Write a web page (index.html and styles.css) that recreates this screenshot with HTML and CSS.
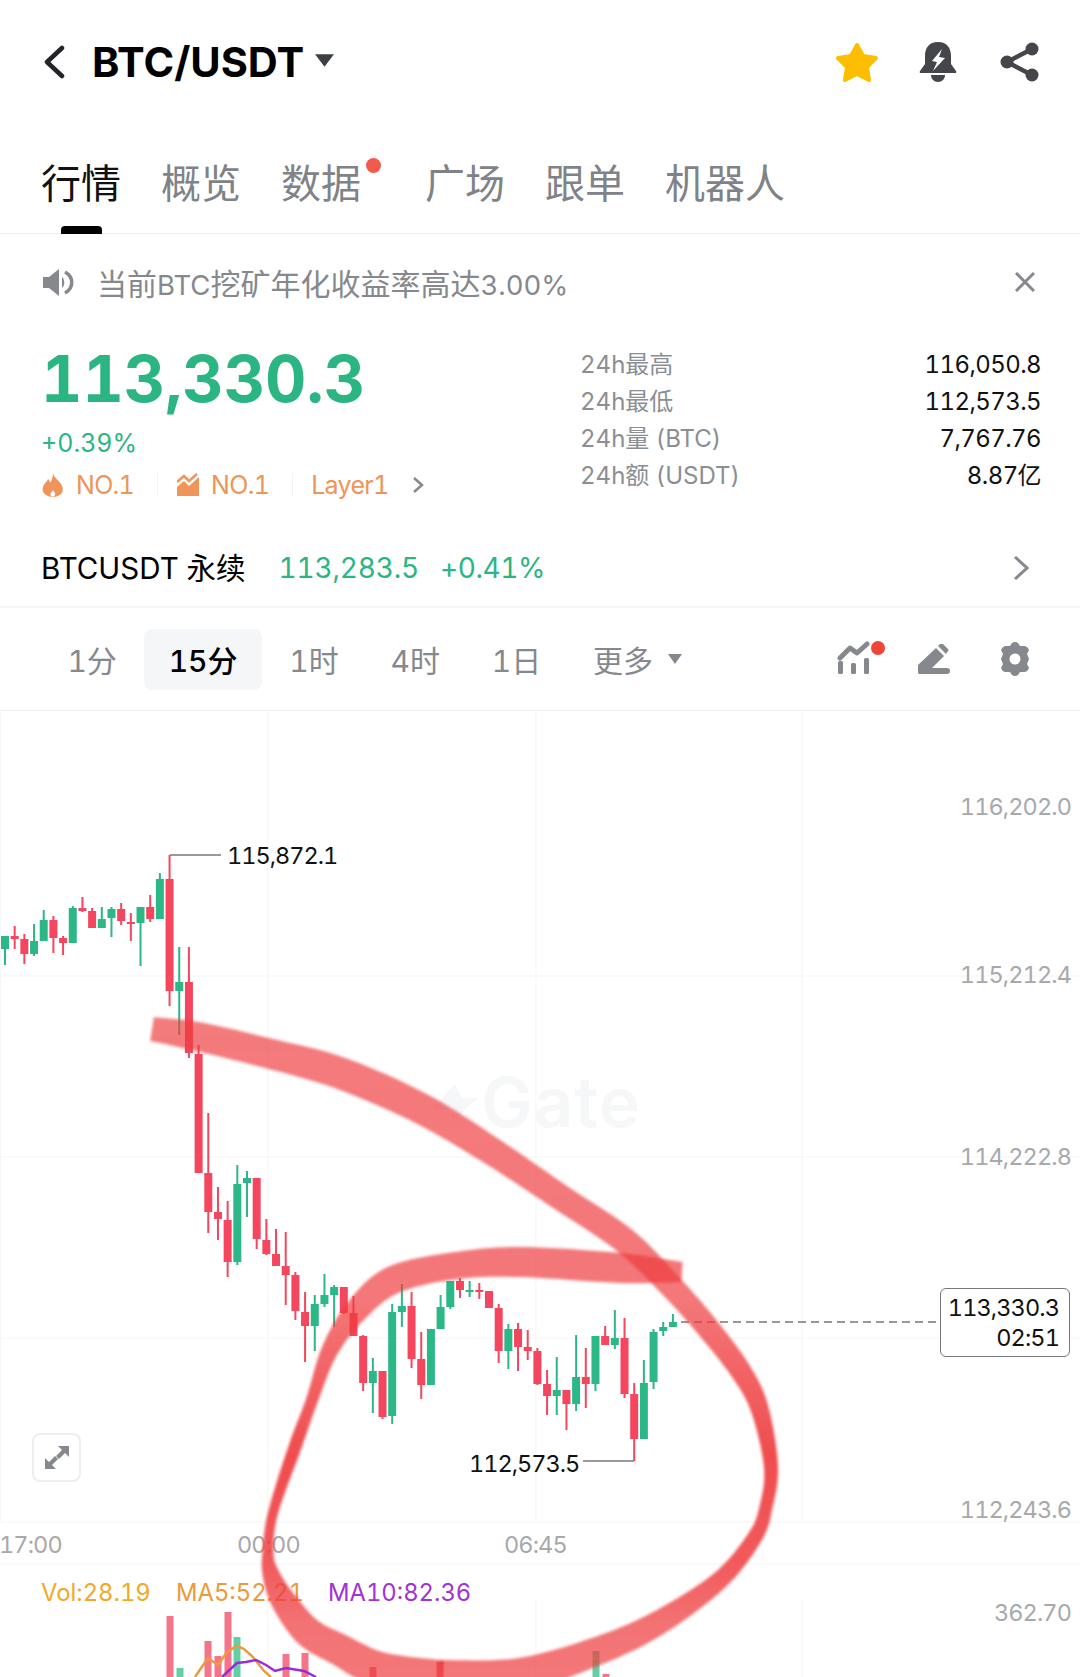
FILE: index.html
```html
<!DOCTYPE html>
<html lang="zh-CN">
<head>
    <meta charset="UTF-8">
    <meta name="viewport" content="width=device-width, initial-scale=1.0">
    <title>BTC/USDT</title>
    <link rel="stylesheet" href="styles.css">
</head>
<body>
<div class="page">
    <header class="top-bar">
        <svg class="back-icon" viewBox="0 0 24 34"><polyline points="20,3 5,17 20,31"/></svg>
        <h1 class="pair">BTC/USDT</h1>
        <svg class="pair-caret" viewBox="0 0 20 14"><path d="M1 1H19L10 13Z"/></svg>
        <div class="top-actions">
            <svg class="star-icon" viewBox="0 0 44 41"><polygon points="22,3 28,14 41,16 32,25 34,38 22,32 10,38 12,25 3,16 16,14"/></svg>
            <svg class="bell-icon" viewBox="0 0 38 40">
                <path d="M19 0C10 0 6 6 6 14V22L1 29Q0 31 2 31H36Q38 31 37 29L32 22V14C32 6 28 0 19 0Z"/>
                <path d="M12 33H26C26 37 23 40 19 40C15 40 12 37 12 33Z"/>
                <polygon class="bolt" points="23,7 13,19 18,20 14,29 26,16 20,15"/>
            </svg>
            <svg class="share-icon" viewBox="0 0 40 40">
                <line x1="32" y1="7" x2="7" y2="20"/>
                <line x1="7" y1="20" x2="32" y2="33"/>
                <circle cx="32" cy="7" r="6.5"/>
                <circle cx="7" cy="20" r="6.5"/>
                <circle cx="32" cy="33" r="6.5"/>
            </svg>
        </div>
    </header>

    <nav class="tabs">
        <div class="tab tab-active">行情</div>
        <div class="tab">概览</div>
        <div class="tab tab-dot">数据</div>
        <div class="tab">广场</div>
        <div class="tab">跟单</div>
        <div class="tab">机器人</div>
    </nav>

    <div class="notice">
        <div class="notice-left">
            <svg class="speaker-icon" viewBox="0 0 31 27">
                <path d="M0 8H6L16 0V27L6 19H0Z"/>
                <path d="M19 8C22 10 22 17 19 19Z"/>
                <path class="arc" d="M22 3C31 8 31 19 22 24"/>
            </svg>
            <span>当前<span class="latin">BTC</span>挖矿年化收益率高达<span class="latin">3.00%</span></span>
        </div>
        <svg class="close-icon" viewBox="0 0 20 20"><path d="M1 1L19 19M19 1L1 19"/></svg>
    </div>

    <section class="summary">
        <div class="summary-left">
            <div class="price">113,330.3</div>
            <div class="change">+0.39%</div>
            <div class="tags">
                <svg class="tag-icon" viewBox="0 0 22 24"><path d="M11 0C12 5 18 8 20 13C23 20 17 24 11 24C5 24 -1 20 1 14C2 10 5 9 6 6C8 8 8 9 8 10C10 7 11 4 11 0Z"/><path class="tag-cut" d="M11 17C12 19 14 20 13 22C12 24 9 24 8.5 22C8 20 10 19 11 17Z"/></svg>
                <span class="tag-text">NO.1</span>
                <span class="tag-sep"></span>
                <svg class="tag-icon" viewBox="0 0 22 24"><path d="M0 14L7 8L12 13L22 4V23H0Z"/><path class="tag-line" d="M0 9L7 3L12 8L20 1"/></svg>
                <span class="tag-text">NO.1</span>
                <span class="tag-sep"></span>
                <span class="tag-text">Layer1</span>
                <svg class="tag-more" viewBox="0 0 12 16"><polyline points="2,1 10,8 2,15"/></svg>
            </div>
        </div>
        <dl class="stats">
            <div class="stat"><dt>24h最高</dt><dd>116,050.8</dd></div>
            <div class="stat"><dt>24h最低</dt><dd>112,573.5</dd></div>
            <div class="stat"><dt>24h量 (BTC)</dt><dd>7,767.76</dd></div>
            <div class="stat"><dt>24h额 (USDT)</dt><dd>8.87亿</dd></div>
        </dl>
    </section>

    <div class="perp">
        <span class="perp-name">BTCUSDT 永续</span>
        <span class="perp-price">113,283.5</span>
        <span class="perp-change">+0.41%</span>
        <svg class="perp-more" viewBox="0 0 16 24"><polyline points="2,1 14,12 2,23"/></svg>
    </div>

    <div class="toolbar">
        <div class="interval">1分</div>
        <div class="interval interval-active">15分</div>
        <div class="interval">1时</div>
        <div class="interval">4时</div>
        <div class="interval">1日</div>
        <div class="interval">更多<svg class="more-caret" viewBox="0 0 14 10"><path d="M0 0H14L7 10Z"/></svg></div>
        <div class="tools">
            <svg class="tool-chart" viewBox="0 0 50 36">
                <path class="zig" d="M3 17L13 7L20 12L30 3"/>
                <rect x="1" y="20" width="5" height="13" rx="1.5"/>
                <rect x="14" y="22" width="5" height="11" rx="1.5"/>
                <rect x="27" y="17" width="5" height="16" rx="1.5"/>
                <circle class="tool-dot" cx="41" cy="7" r="7"/>
            </svg>
            <svg class="tool-pen" viewBox="0 0 32 30">
                <path d="M1 30Q0 30 0 28V21L18 4L26 12L14 24H29Q32 24 32 27T29 30Z"/>
                <path d="M20 2L22 0Q23 -1 25 0L30 5Q31 6 30 7L28 10Z"/>
            </svg>
            <svg class="tool-gear" viewBox="0 0 32 34">
                <path fill-rule="evenodd" d="M13 1Q16 -1 19 1L21 4L26 4Q29 5 30 8L28 12L30 17L28 22L30 26Q29 29 26 30L21 30L19 33Q16 35 13 33L11 30L6 30Q3 29 2 26L4 22L2 17L4 12L2 8Q3 5 6 4L11 4ZM16 11.5A5.5 5.5 0 1 0 16 22.5A5.5 5.5 0 1 0 16 11.5Z"/>
            </svg>
        </div>
    </div>

    <div class="chart">
        <svg class="chart-svg" viewBox="0 711 1080 966">
            <defs>
                <linearGradient id="penFill" gradientUnits="userSpaceOnUse" x1="0" y1="1030" x2="0" y2="1677">
                    <stop offset="0" stop-color="#ee3c3e" stop-opacity="0.68"/>
                    <stop offset="0.42" stop-color="#ee3c3e" stop-opacity="0.7"/>
                    <stop offset="0.66" stop-color="#ee3c3e" stop-opacity="0.92"/>
                    <stop offset="0.82" stop-color="#ee3c3e" stop-opacity="0.85"/>
                    <stop offset="0.92" stop-color="#ee3c3e" stop-opacity="0.72"/>
                    <stop offset="1" stop-color="#ee3c3e" stop-opacity="0.7"/>
                </linearGradient>
            </defs>
            <g class="grid">
                <line x1="0" y1="976" x2="1080" y2="976"/>
                <line x1="0" y1="1157" x2="1080" y2="1157"/>
                <line x1="0" y1="1338" x2="1080" y2="1338"/>
                <line x1="0" y1="1522" x2="1080" y2="1522"/>
                <line x1="0" y1="1564" x2="1080" y2="1564"/>
                <line x1="0.5" y1="711" x2="0.5" y2="1522"/>
                <line x1="268" y1="711" x2="268" y2="1522"/>
                <line x1="536" y1="711" x2="536" y2="1522"/>
                <line x1="802" y1="711" x2="802" y2="1522"/>
                <line x1="268" y1="1600" x2="268" y2="1677"/>
                <line x1="536" y1="1600" x2="536" y2="1677"/>
                <line x1="802" y1="1600" x2="802" y2="1677"/>
            </g>
            <path class="watermark-logo" d="M455 1084L435 1106Q432 1110 438 1110H452V1122L478 1098H462Z"/>
            <text class="watermark" x="481" y="1127">Gate</text>

            <g id="candles"></g>
            <g id="volumes"></g>
            <polyline class="ma5" points="195,1677 208,1658 218,1665 227,1652 237,1646 244,1649 253,1657 264,1671 271,1677"/>
            <polyline class="ma10" points="222,1677 237,1663 246,1662 256,1660 266,1665 275,1671 286,1668 304,1671 316,1677"/>

            <path class="leader" d="M170 855H221"/>
            <path class="leader" d="M583 1461H634"/>
            <text class="label-dark" x="227" y="864">115,872.1</text>
            <text class="label-dark" x="469" y="1472">112,573.5</text>
            <line class="last-line" x1="681" y1="1322" x2="936" y2="1322"/>

            <text class="axis" x="1071" y="815">116,202.0</text>
            <text class="axis" x="1071" y="983">115,212.4</text>
            <text class="axis" x="1071" y="1165">114,222.8</text>
            <text class="axis" x="1071" y="1518">112,243.6</text>
            <text class="axis" x="1071" y="1621">362.70</text>
            <text class="axis-time" x="-1" y="1553">17:00</text>
            <text class="axis-time" x="237" y="1553">00:00</text>
            <text class="axis-time" x="504" y="1553">06:45</text>

            <text class="legend legend-vol" x="41" y="1601">Vol:28.19</text>
            <text class="legend legend-ma5" x="176" y="1601">MA5:52.21</text>
            <text class="legend legend-ma10" x="328" y="1601">MA10:82.36</text>

            <g id="pen" class="pen"></g>
        </svg>

        <div class="expand-btn">
            <svg viewBox="0 0 24 23">
                <path d="M13 0H24V11L20 7L14 13L11 10L17 4Z"/>
                <path d="M0 12L4 16L10 10L13 13L7 19L11 23H0Z"/>
            </svg>
        </div>
        <div class="price-tag">
            <div>113,330.3</div>
            <div>02:51</div>
        </div>
    </div>
</div>
<script src="chart.js"></script>
</body>
</html>
```

FILE: styles.css
```css
* {
    box-sizing: border-box;
}
body {
    margin: 0;
    background: #ffffff;
    font-family: Inter, "Noto Sans CJK SC", sans-serif;
    font-variant-numeric: tabular-nums;
    color: #000000;
}
.page {
    width: 1080px;
    height: 1677px;
    overflow: hidden;
    display: flex;
    flex-direction: column;
}

/* top bar */
.top-bar {
    height: 124px;
    flex: none;
    display: flex;
    align-items: center;
    padding: 0 40px 0 42px;
}
.back-icon {
    width: 24px;
    height: 34px;
}
.back-icon polyline {
    fill: none;
    stroke: #222428;
    stroke-width: 4.5;
    stroke-linecap: round;
    stroke-linejoin: round;
}
.pair {
    margin: 0 0 0 26px;
    font-size: 41.5px;
    font-weight: 700;
    line-height: 44px;
}
.pair-caret {
    width: 21px;
    height: 15px;
    margin-left: 10px;
    margin-top: -3px;
    fill: #3c3f44;
}
.top-actions {
    margin-left: auto;
    display: flex;
    align-items: center;
}
.star-icon {
    width: 44px;
    height: 41px;
}
.star-icon polygon {
    fill: #fdbd00;
    stroke: #fdbd00;
    stroke-width: 4;
    stroke-linejoin: round;
}
.bell-icon {
    width: 38px;
    height: 40px;
    margin-left: 40px;
    fill: #44464b;
}
.bell-icon .bolt {
    fill: #ffffff;
}
.share-icon {
    width: 40px;
    height: 40px;
    margin-left: 43px;
    fill: #44464b;
}
.share-icon line {
    stroke: #44464b;
    stroke-width: 4.5;
}

/* tabs */
.tabs {
    height: 110px;
    flex: none;
    display: flex;
    gap: 40px;
    padding-left: 41px;
    border-bottom: 1px solid #eeeeee;
}
.tab {
    position: relative;
    height: 110px;
    padding-top: 40px;
    font-size: 40px;
    line-height: 40px;
    color: #7f8387;
}
.tab-active {
    color: #111111;
}
.tab-active::after {
    content: "";
    position: absolute;
    left: 20px;
    bottom: 0;
    width: 41px;
    height: 8px;
    border-radius: 4px 4px 0 0;
    background: #000000;
}
.tab-dot {
    margin-right: 24px;
}
.tab-dot::after {
    content: "";
    position: absolute;
    right: -20px;
    top: 34px;
    width: 15px;
    height: 15px;
    border-radius: 50%;
    background: #f25a4d;
}

/* notice */
.notice {
    height: 96px;
    flex: none;
    display: flex;
    align-items: center;
    justify-content: space-between;
    margin-bottom: 4px;
    padding: 0 45px 0 43px;
}
.notice-left {
    display: flex;
    align-items: center;
    gap: 23px;
    font-size: 30px;
    color: #85888d;
}
.latin {
    font-size: 27.5px;
}
.speaker-icon {
    width: 31px;
    height: 27px;
    fill: #85888d;
}
.speaker-icon .arc {
    fill: none;
    stroke: #85888d;
    stroke-width: 3.5;
}
.close-icon {
    width: 20px;
    height: 20px;
}
.close-icon path {
    fill: none;
    stroke: #85888d;
    stroke-width: 3;
}

/* price summary */
.summary {
    height: 190px;
    flex: none;
    display: flex;
    justify-content: space-between;
    padding: 0 39px 0 41px;
}
.price {
    margin-top: 11px;
    font-size: 64px;
    font-weight: 700;
    line-height: 68px;
    color: #2bb583;
}
.change {
    margin-top: 15px;
    font-size: 25px;
    line-height: 30px;
    color: #2bb583;
}
.tags {
    margin-top: 12px;
    display: flex;
    align-items: center;
    height: 30px;
    font-size: 25px;
    color: #ee9558;
}
.tag-text {
    letter-spacing: -0.7px;
}
.tag-icon {
    width: 22px;
    height: 24px;
    margin-left: 1px;
    margin-right: 12px;
    fill: #f0955a;
}
.tag-cut {
    fill: #ffffff;
}
.tag-line {
    fill: none;
    stroke: #f0955a;
    stroke-width: 2.5;
}
.tag-sep {
    width: 1px;
    height: 24px;
    margin: 0 18px 0 23px;
    background: #f3f3f3;
}
.tag-more {
    width: 12px;
    height: 16px;
    margin-left: 23px;
}
.tag-more polyline {
    fill: none;
    stroke: #85888d;
    stroke-width: 2.5;
}
.stats {
    width: 461px;
    margin: 12px 0 0 0;
}
.stat {
    height: 37px;
    display: flex;
    align-items: center;
    justify-content: space-between;
    font-size: 24px;
    line-height: 30px;
}
.stat dt {
    color: #8b8e93;
}
.stat dd {
    margin: 0;
    letter-spacing: -0.6px;
    color: #111111;
}

/* perpetual row */
.perp {
    height: 84px;
    flex: none;
    display: flex;
    align-items: center;
    padding: 5px 51px 0 41px;
    border-bottom: 2px solid #f5f5f5;
    font-size: 28px;
    line-height: 34px;
}
.perp-name {
    font-size: 29.5px;
}
.perp-price {
    margin-left: 33px;
    letter-spacing: -0.2px;
    color: #2bb583;
}
.perp-change {
    margin-left: 21px;
    letter-spacing: -0.4px;
    color: #2bb583;
}
.perp-more {
    width: 16px;
    height: 24px;
    margin-left: auto;
}
.perp-more polyline {
    fill: none;
    stroke: #85888d;
    stroke-width: 3;
}

/* interval toolbar */
.toolbar {
    height: 103px;
    flex: none;
    display: flex;
    align-items: center;
    gap: 3px;
    padding: 0 49px 0 43px;
    border-bottom: 1px solid #f0f0f0;
}
.interval {
    height: 61px;
    display: flex;
    align-items: center;
    padding: 0 24.4px;
    font-size: 30px;
    color: #85888d;
}
.interval-active {
    background: #f5f6f7;
    border-radius: 8px;
    color: #000000;
    font-weight: 500;
}
.more-caret {
    width: 14px;
    height: 10px;
    margin-left: 15px;
    fill: #85888d;
}
.tools {
    margin-left: auto;
    display: flex;
    align-items: center;
}
.tool-chart {
    width: 50px;
    height: 36px;
    fill: #85888d;
}
.tool-chart .zig {
    fill: none;
    stroke: #85888d;
    stroke-width: 5;
    stroke-linecap: round;
    stroke-linejoin: round;
}
.tool-chart .tool-dot {
    fill: #f04438;
}
.tool-pen {
    width: 32px;
    height: 30px;
    margin-left: 31px;
    fill: #85888d;
}
.tool-gear {
    width: 32px;
    height: 34px;
    margin-left: 49px;
    fill: #85888d;
}

/* chart */
.chart {
    position: relative;
    flex: 1;
}
.chart-svg {
    display: block;
    width: 1080px;
    height: 966px;
}
.grid line {
    stroke: #f6f6f6;
    stroke-width: 1.2;
}
.watermark {
    font-size: 69px;
    font-weight: 600;
    letter-spacing: 1px;
    fill: #f6f7f8;
}
.watermark-logo {
    fill: #f6f7f8;
}
.ma5,
.ma10 {
    fill: none;
    stroke-width: 2.5;
}
.ma5 {
    stroke: #ec9a3c;
}
.ma10 {
    stroke: #9b2bd6;
}
.leader {
    fill: none;
    stroke: #777777;
    stroke-width: 1.5;
}
.last-line {
    stroke: #777777;
    stroke-width: 1.5;
    stroke-dasharray: 8 5;
}
.label-dark {
    font-size: 23.5px;
    letter-spacing: -1px;
    fill: #111111;
}
.axis,
.axis-time {
    font-size: 23.5px;
    letter-spacing: -0.9px;
    fill: #a8a9ab;
}
.axis {
    text-anchor: end;
}
.legend {
    font-size: 23.8px;
}
.legend-vol {
    fill: #f0a928;
}
.legend-ma5 {
    fill: #ec9a3c;
}
.legend-ma10 {
    fill: #a231d6;
}
.pen {
    filter: blur(1.8px);
}
.expand-btn {
    position: absolute;
    left: 32px;
    top: 722px;
    width: 49px;
    height: 49px;
    display: flex;
    align-items: center;
    justify-content: center;
    background: #ffffff;
    border: 2px solid #eeeeee;
    border-radius: 8px;
}
.expand-btn svg {
    width: 24px;
    height: 23px;
    fill: #85888d;
}
.price-tag {
    position: absolute;
    left: 940px;
    top: 577px;
    width: 130px;
    height: 69px;
    padding: 4px 10px 0 0;
    background: #ffffff;
    border: 1.5px solid #777777;
    border-radius: 6px;
    font-size: 23.5px;
    letter-spacing: -0.9px;
    line-height: 30px;
    text-align: right;
    color: #111111;
}
```

FILE: chart.js
```js
// candles: bodyTop, bodyBottom, wickTop, wickBottom, color (page coordinates)
const candles = [
    [936,949,936,965,'g'],[936,939,926,949,'r'],[939,954,934,964,'r'],[941,954,924,956,'g'],
    [920,941,910,941,'g'],[920,938,916,953,'r'],[938,943,936,955,'r'],[908,943,906,943,'g'],
    [908,911,897,912,'r'],[911,928,908,928,'r'],[919,928,907,928,'g'],[909,918,907,937,'g'],
    [909,921,903,925,'r'],[922,923,913,941,'r'],[907,923,907,966,'g'],[907,919,895,922,'r'],
    [879,919,873,919,'g'],[879,991,855,1006,'r'],[982,991,947,1035,'g'],[982,1053,947,1058,'r'],
    [1054,1173,1045,1173,'r'],[1173,1212,1113,1233,'r'],[1212,1219,1187,1240,'r'],[1220,1262,1201,1277,'r'],
    [1184,1262,1165,1265,'g'],[1178,1183,1171,1217,'g'],[1178,1239,1178,1249,'r'],[1240,1254,1219,1255,'r'],
    [1254,1266,1229,1266,'r'],[1266,1275,1232,1305,'r'],[1275,1311,1272,1320,'r'],[1312,1326,1292,1362,'r'],
    [1304,1326,1295,1351,'g'],[1295,1304,1274,1307,'g'],[1287,1295,1285,1327,'g'],[1287,1313,1287,1314,'r'],
    [1313,1336,1296,1336,'r'],[1336,1383,1335,1391,'r'],[1371,1383,1358,1413,'g'],[1371,1417,1371,1419,'r'],
    [1312,1416,1304,1424,'g'],[1306,1312,1284,1327,'g'],[1306,1359,1292,1368,'r'],[1359,1385,1332,1399,'r'],
    [1329,1385,1329,1385,'g'],[1307,1329,1295,1329,'g'],[1281,1307,1281,1309,'g'],[1281,1290,1278,1298,'r'],
    [1290,1291,1281,1297,'g'],[1290,1291,1283,1299,'r'],[1291,1308,1291,1308,'r'],[1308,1351,1304,1363,'r'],
    [1329,1351,1324,1369,'g'],[1329,1347,1323,1371,'r'],[1347,1351,1330,1360,'r'],[1351,1384,1348,1385,'r'],
    [1384,1396,1370,1415,'r'],[1390,1396,1357,1415,'g'],[1390,1404,1390,1430,'r'],[1377,1404,1335,1411,'g'],
    [1377,1384,1348,1408,'r'],[1336,1384,1336,1391,'g'],[1336,1345,1326,1345,'r'],[1338,1345,1310,1349,'g'],
    [1338,1394,1318,1398,'r'],[1394,1439,1383,1461,'r'],[1383,1439,1360,1439,'g'],[1332,1382,1329,1389,'g'],
    [1327,1331,1322,1336,'g'],[1322,1327,1314,1327,'g']
];

// volume bars: x, top, color
const volumes = [
    [170,1616,'r'],[180,1668,'g'],[208,1641,'r'],[218,1656,'r'],[228,1612,'r'],[237,1637,'g'],
    [286,1654,'r'],[305,1653,'r'],[373,1667,'r'],[440,1662,'r'],[596,1651,'g'],[606,1674,'r']
];

// hand drawn circle: centre line x, y and pen width
const penPoints = [
    [152,1029,24],[200,1037,29],[267,1053,30],[340,1073,32],[420,1108,31],[490,1150,28],
    [560,1197,26],[624,1240,26],[670,1285,24],[708,1328,23],[742,1373,21],[760,1410,18],[771,1467,14],
    [766,1507,13],[755,1537,15],[720,1580,18],[660,1622,24],[600,1650,28],[520,1675,34],[440,1682,44],
    [380,1670,36],[340,1650,32],[308,1632,30],[283,1600,25],[271,1574,17],[268,1553,11],[273,1513,10],
    [295,1447,13],[312,1400,12],[330,1350,17],[357,1310,24],[393,1280,28],[453,1266,27],[520,1262,30],
    [620,1268,30],[682,1272,20]
];

const SVG_NS = 'http://www.w3.org/2000/svg';
const CANDLE_COLORS = { g: '#2bb886', r: '#f4465e' };
const VOLUME_COLORS = { g: '#62cfa4', r: '#f4748a' };

function addShape(parent, tag, attrs) {
    const el = document.createElementNS(SVG_NS, tag);
    Object.keys(attrs).forEach(key => el.setAttribute(key, attrs[key]));
    parent.appendChild(el);
}

const candleGroup = document.getElementById('candles');
candles.forEach((c, i) => {
    const x = 5 + i * 9.68;
    addShape(candleGroup, 'rect', { x: x - 1, y: c[2], width: 2, height: c[3] - c[2], fill: CANDLE_COLORS[c[4]] });
    addShape(candleGroup, 'rect', { x: x - 4, y: c[0], width: 8, height: Math.max(c[1] - c[0], 2), fill: CANDLE_COLORS[c[4]] });
});

const volumeGroup = document.getElementById('volumes');
volumes.forEach(v => {
    addShape(volumeGroup, 'rect', { x: v[0] - 3.5, y: v[1], width: 7, height: 1677 - v[1], fill: VOLUME_COLORS[v[2]] });
});

// catmull-rom through the pen points, then offset both sides by half the width
function smooth(points) {
    const out = [];
    for (let i = 0; i < points.length - 1; i++) {
        const p0 = points[Math.max(i - 1, 0)];
        const p1 = points[i];
        const p2 = points[i + 1];
        const p3 = points[Math.min(i + 2, points.length - 1)];
        for (let t = 0; t < 1; t += 0.1) {
            const t2 = t * t;
            const t3 = t2 * t;
            out.push([0, 1, 2].map(k => 0.5 * (2 * p1[k] + (p2[k] - p0[k]) * t +
                (2 * p0[k] - 5 * p1[k] + 4 * p2[k] - p3[k]) * t2 +
                (3 * p1[k] - p0[k] - 3 * p2[k] + p3[k]) * t3)));
        }
    }
    out.push(points[points.length - 1]);
    return out;
}

function outline(points) {
    const left = [];
    const right = [];
    points.forEach((p, i) => {
        const a = points[Math.max(i - 1, 0)];
        const b = points[Math.min(i + 1, points.length - 1)];
        const len = Math.hypot(b[0] - a[0], b[1] - a[1]) || 1;
        const nx = (a[1] - b[1]) / len;
        const ny = (b[0] - a[0]) / len;
        left.push((p[0] + nx * p[2] / 2).toFixed(1) + ',' + (p[1] + ny * p[2] / 2).toFixed(1));
        right.unshift((p[0] - nx * p[2] / 2).toFixed(1) + ',' + (p[1] - ny * p[2] / 2).toFixed(1));
    });
    return left.concat(right).join(' ');
}

// two passes so the crossing near the top comes out darker, like a real marker
const penGroup = document.getElementById('pen');
const splitAt = 19;
[penPoints.slice(0, splitAt + 1), penPoints.slice(splitAt)].forEach(part => {
    addShape(penGroup, 'polygon', { points: outline(smooth(part)), fill: 'url(#penFill)' });
});
```
